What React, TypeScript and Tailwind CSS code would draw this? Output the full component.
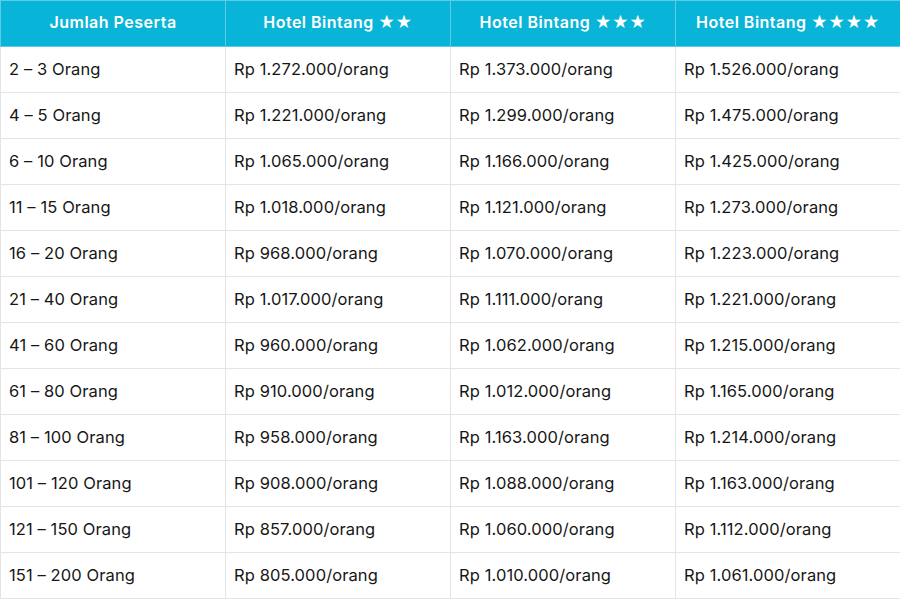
import React from "react";

type Row = {
  jumlah: string;
  b2: string;
  b3: string;
  b4: string;
};

const rows: Row[] = [
  { jumlah: "2 – 3 Orang", b2: "1.272.000", b3: "1.373.000", b4: "1.526.000" },
  { jumlah: "4 – 5 Orang", b2: "1.221.000", b3: "1.299.000", b4: "1.475.000" },
  { jumlah: "6 – 10 Orang", b2: "1.065.000", b3: "1.166.000", b4: "1.425.000" },
  { jumlah: "11 – 15 Orang", b2: "1.018.000", b3: "1.121.000", b4: "1.273.000" },
  { jumlah: "16 – 20 Orang", b2: "968.000", b3: "1.070.000", b4: "1.223.000" },
  { jumlah: "21 – 40 Orang", b2: "1.017.000", b3: "1.111.000", b4: "1.221.000" },
  { jumlah: "41 – 60 Orang", b2: "960.000", b3: "1.062.000", b4: "1.215.000" },
  { jumlah: "61 – 80 Orang", b2: "910.000", b3: "1.012.000", b4: "1.165.000" },
  { jumlah: "81 – 100 Orang", b2: "958.000", b3: "1.163.000", b4: "1.214.000" },
  { jumlah: "101 – 120 Orang", b2: "908.000", b3: "1.088.000", b4: "1.163.000" },
  { jumlah: "121 – 150 Orang", b2: "857.000", b3: "1.060.000", b4: "1.112.000" },
  { jumlah: "151 – 200 Orang", b2: "805.000", b3: "1.010.000", b4: "1.061.000" },
];

const headers = [
  "Jumlah Peserta",
  "Hotel Bintang ★★",
  "Hotel Bintang ★★★",
  "Hotel Bintang ★★★★",
];

const cell =
  "border border-[#e4e4e4] px-2 pb-px text-[16.5px] tracking-[0.1px] text-[#161616]";

export default function App() {
  return (
    <div
      className="w-[900px] h-[600px] overflow-hidden bg-white"
      style={{ fontFamily: "Inter, 'Noto Sans', sans-serif" }}
    >
      <table className="w-[899px] table-fixed border-collapse">
        <thead>
          <tr className="h-[46px] bg-[#08b4d8]">
            {headers.map((h) => (
              <th
                key={h}
                className="w-[225px] border border-[#5ccbe6] pb-[4px] text-center text-[16px] font-semibold tracking-[0.5px] text-white"
              >
                {h}
              </th>
            ))}
          </tr>
        </thead>
        <tbody>
          {rows.map((r) => (
            <tr key={r.jumlah} className="h-[46px]">
              <td className={cell}>{r.jumlah}</td>
              <td className={cell}>Rp {r.b2}/orang</td>
              <td className={cell}>Rp {r.b3}/orang</td>
              <td className={cell}>Rp {r.b4}/orang</td>
            </tr>
          ))}
        </tbody>
      </table>
    </div>
  );
}
